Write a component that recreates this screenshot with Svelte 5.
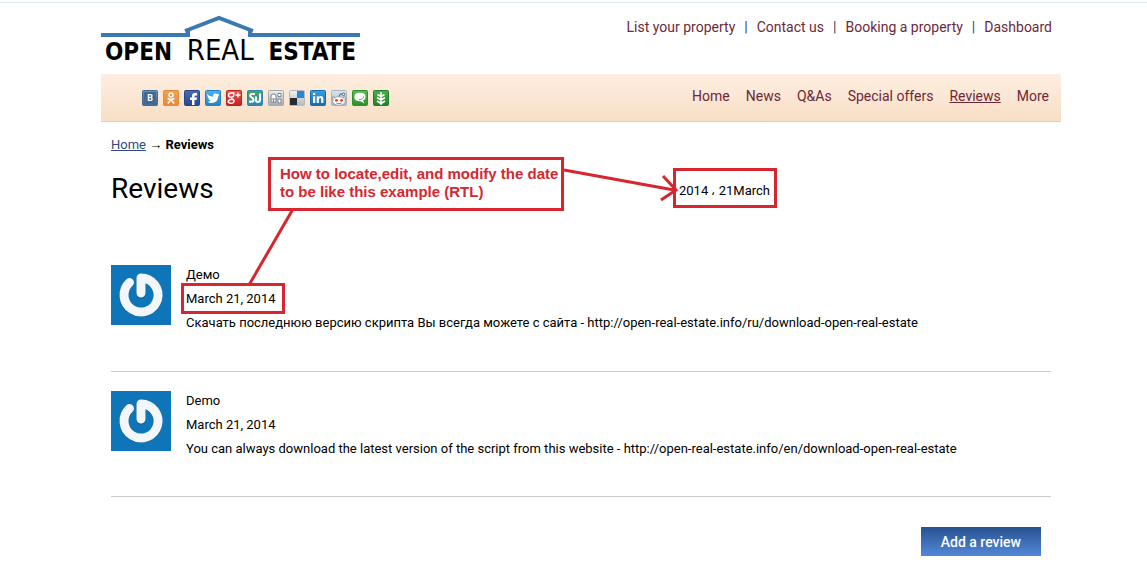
<script>
	const topLinks = ['List your property', 'Contact us', 'Booking a property', 'Dashboard'];
	const menu = ['Home', 'News', 'Q&As', 'Special offers', 'Reviews', 'More'];
	const socials = [
		{ id: 'vk', name: 'VKontakte', from: '#6d91b5', to: '#436b95' },
		{ id: 'ok', name: 'Odnoklassniki', from: '#f5a34e', to: '#e5893a' },
		{ id: 'facebook', name: 'Facebook', from: '#4a6db0', to: '#27468c' },
		{ id: 'twitter', name: 'Twitter', from: '#55b0e6', to: '#2183c4' },
		{ id: 'google', name: 'Google Plus', from: '#ea5550', to: '#c3201f' },
		{ id: 'stumble', name: 'StumbleUpon', from: '#45a85c', to: '#2b86b8' },
		{ id: 'buzz', name: 'Friends', from: '#e9edf0', to: '#a3abb1' },
		{ id: 'delicious', name: 'Delicious', from: '#f1f4f6', to: '#b3b9bd' },
		{ id: 'linkedin', name: 'LinkedIn', from: '#3f9edb', to: '#126eb0' },
		{ id: 'reddit', name: 'Reddit', from: '#dce5ec', to: '#a3b5c4' },
		{ id: 'technorati', name: 'Technorati', from: '#5fbb52', to: '#2c912b' },
		{ id: 'newsvine', name: 'Newsvine', from: '#4fae49', to: '#237f27' }
	];
	const reviews = [
		{
			name: 'Демо',
			date: 'March 21, 2014',
			text: 'Скачать последнюю версию скрипта Вы всегда можете с сайта - http://open-real-estate.info/ru/download-open-real-estate'
		},
		{
			name: 'Demo',
			date: 'March 21, 2014',
			text: 'You can always download the latest version of the script from this website - http://open-real-estate.info/en/download-open-real-estate'
		}
	];
</script>

<div class="page">
	<header>
		<a class="logo" href="/" aria-label="Open Real Estate">
			<svg class="roof" viewBox="0 0 259 24" aria-hidden="true">
				<path d="M0 21H87V17M84 17L118 4L152 17M149 17V21H259" />
			</svg>
			<span class="logo-text"><b>OPEN</b><span>REAL</span><b>ESTATE</b></span>
		</a>
		<ul class="top-links">
			{#each topLinks as link}
				<li><a href="/">{link}</a></li>
			{/each}
		</ul>
	</header>

	<nav>
		<div class="socials">
			{#each socials as s}
				<a href="/" aria-label={s.name}>
					<svg viewBox="0 0 16 16">
						<defs>
							<linearGradient id={s.id} x1="0" y1="0" x2="0" y2="1">
								<stop offset="0" stop-color={s.from} />
								<stop offset="1" stop-color={s.to} />
							</linearGradient>
						</defs>
						<rect x=".5" y=".5" width="15" height="15" rx="1" fill="url(#{s.id})" stroke={s.to} />
						{#if s.id === 'vk'}
							<rect x="2" y="2" width="12" height="12" fill="#416993" />
							<text x="8" y="11" font-size="9" text-anchor="middle">B</text>
						{:else if s.id === 'ok'}
							<circle cx="8" cy="5" r="2" fill="none" stroke="#fff" stroke-width="1.5" />
							<path d="M4.7 8.3Q8 10.7 11.3 8.3M8 9.8L4.8 13.5M8 9.8L11.2 13.5" fill="none" stroke="#fff" stroke-width="1.6" />
						{:else if s.id === 'facebook'}
							<path d="M8 15V10H6V7.5H8V6Q8 3 11 3H13V5.4H11.7Q10.5 5.4 10.5 6.5V7.5H13L12.6 10H10.5V15Z" fill="#fff" />
						{:else if s.id === 'twitter'}
							<path d="M2 4Q4.5 6.7 8 6.8Q7.7 3.8 10.2 3.5Q11.5 3.3 12.3 4.2L14 3.8L13.3 5.2L14.3 5.3L13 6.6Q13 12 8.2 12.8Q5 13.3 2.3 11.7Q4.6 11.7 5.8 10.8Q3.9 10.3 3.5 9H4.6Q2.6 8 2.4 6.5L3.3 6.6Q1.7 5.4 2 4Z" fill="#fff" />
						{:else if s.id === 'google'}
							<path d="M8.5 3H5Q2.5 3.2 2.5 5.2Q2.7 7.4 5.5 7.2Q4.8 8.1 6.2 9Q8.5 10.3 8 11.7Q7.2 13.6 4.4 13.3Q1.8 12.9 2.3 11.1Q3 9.4 6 9.5M7 3Q8.2 4.1 7.7 5.7Q7.2 6.9 5.5 7.2M9.5 5H14.5M12 2.5V7.5" fill="none" stroke="#fff" stroke-width="1.5" />
						{:else if s.id === 'stumble'}
							<path d="M8 4H4.8Q3.2 4 3.2 5.6Q3.2 7 4.8 7.6Q6.5 8.2 6.5 9.7Q6.5 11.6 4.7 11.6H2M9 6.5V10Q9 12 10.7 12Q13 12 13 9.5V3.5" fill="none" stroke="#fff" stroke-width="2.1" />
						{:else if s.id === 'buzz'}
							<path d="M3 12V6Q3 4 5.5 4T8 6V12ZM3 9H8M10 3.5H13V6.5H10ZM10 9H13V13H10ZM5.5 9V12" fill="#fff" stroke="#7d858b" />
						{:else if s.id === 'delicious'}
							<path d="M8 1H15V8H8Z" fill="#2888d2" />
							<path d="M1 8H8V15H1Z" fill="#252b31" />
						{:else if s.id === 'linkedin'}
							<path d="M3 6.3H5.2V13H3ZM3 3H5.2V5.1H3ZM6.7 6.3H8.8V7.2Q9.7 6 11.2 6.1Q13.4 6.3 13.4 9V13H11.2V9.4Q11.2 8 10.1 8Q8.9 8 8.9 9.5V13H6.7Z" fill="#fff" />
						{:else if s.id === 'reddit'}
							<path d="M8 7L9.2 3.8L12 4.3" fill="none" stroke="#56636d" />
							<circle cx="12.5" cy="4.3" r="1.3" fill="#fff" stroke="#56636d" />
							<circle cx="2.5" cy="8.3" r="1.4" fill="#fff" stroke="#7b8790" />
							<circle cx="13.5" cy="8.3" r="1.4" fill="#fff" stroke="#7b8790" />
							<ellipse cx="8" cy="11" rx="6.3" ry="4.2" fill="#fff" stroke="#7b8790" stroke-width=".6" />
							<circle cx="5.4" cy="10.3" r="1.4" fill="#df3c1c" />
							<circle cx="10.6" cy="10.3" r="1.4" fill="#df3c1c" />
							<path d="M5.4 13Q8 14.5 10.6 13" fill="none" stroke="#56636d" stroke-width=".8" />
						{:else if s.id === 'technorati'}
							<path d="M8 2.8Q13.6 2.8 13.6 7Q13.6 9.6 11 10.7L12.5 13.5L8.5 11.2Q2.3 11.3 2.3 7Q2.4 2.8 8 2.8Z" fill="#fff" />
							<path d="M7 9.6Q11.3 9.8 11.5 6.2" fill="none" stroke="#68ae60" />
						{:else}
							<path d="M8 2V15M8 6.5L4.5 4.5M8 6.5L11.5 4.5M8 10L4 7.5M8 10L12 7.5M8 13.5L4 11M8 13.5L12 11" fill="none" stroke="#fff" stroke-width="1.5" />
						{/if}
					</svg>
				</a>
			{/each}
		</div>
		<ul class="menu">
			{#each menu as item}
				<li><a href="/" class:active={item === 'Reviews'}>{item}</a></li>
			{/each}
		</ul>
	</nav>

	<main>
		<div class="breadcrumbs"><a href="/">Home</a> <span>→</span> <b>Reviews</b></div>
		<h1>Reviews</h1>

		{#each reviews as review}
			<article>
				<svg class="avatar" viewBox="0 0 60 60" role="img" aria-label={review.name}>
					<rect width="60" height="60" fill="#0e76b8" />
					<g fill="none" stroke-linecap="round" stroke-linejoin="round">
						<path d="M18.5 18A17 17 0 1 0 30 13.5V29" stroke="#07568c" stroke-width="9" />
						<path d="M18.5 17.5A17 17 0 1 0 30 13V28" stroke="#f3f6fb" stroke-width="9" />
					</g>
				</svg>
				<div>
					<p>{review.name}</p>
					<p>{review.date}</p>
					<p>{review.text}</p>
				</div>
			</article>
		{/each}

		<div class="actions">
			<button type="button">Add a review</button>
		</div>
	</main>

	<!-- notes drawn over the page -->
	<svg class="arrows" width="800" height="330" aria-hidden="true">
		<path d="M293 209L249 285M564 170L674 190M663 176L676 190L661 200" />
	</svg>
	<p class="note question">How to locate,edit, and modify the date<br />to be like this example (RTL)</p>
	<p class="note example">2014 <small>،</small> 21March</p>
	<div class="note mark"></div>
</div>

<style>
	:global(body) {
		background: #fff;
	}

	.page {
		position: relative;
		padding: 0 86px 16px 101px;
		border-top: 2px solid #fff;
		box-shadow: inset 0 1px #e1e8f8;
		font-family: Roboto, sans-serif;
		font-size: 13px;
		color: #000;
	}

	ul {
		display: flex;
		list-style: none;
		margin: 0;
		padding: 0;
	}

	p {
		margin: 0;
	}

	header {
		display: flex;
		justify-content: space-between;
		height: 72px;
	}

	.logo {
		width: 259px;
		padding-top: 12px;
		color: #000;
		text-decoration: none;
	}

	.roof {
		display: block;
		width: 259px;
		height: 24px;
		fill: none;
		stroke: #3b79b0;
		stroke-width: 4;
	}

	.logo-text {
		display: flex;
		justify-content: space-between;
		align-items: baseline;
		padding: 0 4px;
		font-family: "DejaVu Sans Condensed", "DejaVu Sans", sans-serif;
		font-size: 24px;
		line-height: 24px;
	}

	.logo-text span {
		font-size: 29px;
	}

	.top-links {
		padding: 16px 9px 0 0;
		line-height: 18px;
	}

	.top-links a,
	.menu a {
		color: #6d2838;
		font-size: 14px;
		text-decoration: none;
	}

	.top-links li + li::before {
		content: "|";
		margin: 0 9px;
		color: #33475c;
		font-size: 14px;
	}

	nav {
		display: flex;
		justify-content: space-between;
		align-items: center;
		height: 47px;
		padding: 0 12px 0 41px;
		background: linear-gradient(#feeee0, #f8dfc7);
		border-bottom: 1px solid #e8cdb3;
	}

	.socials {
		display: flex;
		gap: 5px;
	}

	.socials svg {
		display: block;
		width: 16px;
		height: 16px;
	}

	.socials text {
		fill: #fff;
		font-weight: bold;
	}

	.menu {
		gap: 16px;
		padding-bottom: 3px;
	}

	.menu .active {
		text-decoration: underline;
	}

	main {
		padding: 13px 10px 0;
	}

	.breadcrumbs {
		line-height: 20px;
	}

	.breadcrumbs a {
		color: #2f4a80;
	}

	.breadcrumbs span {
		font-family: "Liberation Serif", serif;
	}

	h1 {
		margin: 16px 0 39px;
		font-size: 28px;
		font-weight: 400;
		line-height: 36px;
	}

	article {
		display: flex;
		gap: 15px;
		padding: 17px 0 36px;
		border-bottom: 1px solid #ccc;
		line-height: 24px;
	}

	article:last-of-type {
		padding-bottom: 35px;
	}

	.avatar {
		flex: none;
		width: 60px;
		height: 60px;
		margin-top: 2px;
	}

	.actions {
		display: flex;
		justify-content: flex-end;
		padding: 30px 10px 0 0;
	}

	button {
		height: 29px;
		padding: 0 20px;
		border: 0;
		background: linear-gradient(#27518f, #5388d8);
		color: #fff;
		font: 500 14px Roboto, sans-serif;
		cursor: pointer;
	}

	.arrows {
		position: absolute;
		top: -2px;
		left: 0;
		fill: none;
		stroke: #d7262f;
		stroke-width: 3;
		pointer-events: none;
	}

	.note {
		position: absolute;
		box-sizing: border-box;
		border: 3px solid #d7262f;
		white-space: nowrap;
	}

	.question {
		top: 155px;
		left: 268px;
		width: 296px;
		height: 54px;
		padding: 5px 9px;
		color: #d7262f;
		font: bold 15px/18px "Liberation Sans", Arial, sans-serif;
	}

	.example {
		top: 166px;
		left: 673px;
		width: 104px;
		height: 40px;
		padding: 12px 3px;
		line-height: 16px;
	}

	.example small {
		font-size: 12px;
		line-height: 1;
	}

	.mark {
		top: 281px;
		left: 181px;
		width: 104px;
		height: 31px;
	}
</style>
